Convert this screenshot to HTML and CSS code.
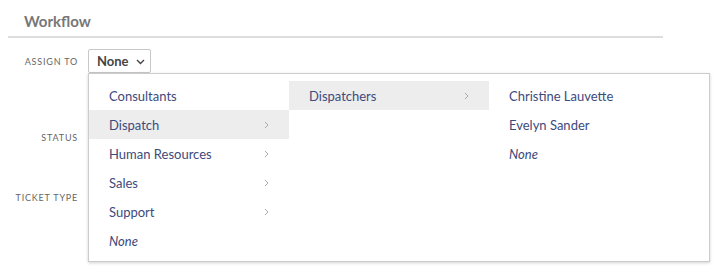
FILE: index.html
```html
<!DOCTYPE html>
<html>
<head>
<meta charset="utf-8">
<link rel="stylesheet" href="styles.css">
</head>
<body>
<section class="workflow">
  <h2 class="title">Workflow</h2>
  <div class="row row-assign">
    <label class="label">Assign to</label>
    <div class="control">
      <button class="select">None <svg class="caret" width="9" height="6" viewBox="0 0 9 6"><path d="M1 1l3.5 3.5L8 1" fill="none" stroke="#444" stroke-width="1.4"/></svg></button>
      <div class="menu">
        <ul class="col">
          <li class="item">Consultants</li>
          <li class="item active">Dispatch<svg class="chev" width="5" height="8" viewBox="0 0 5 8"><path d="M1 1l3 3-3 3" fill="none" stroke="#aaa" stroke-width="1"/></svg></li>
          <li class="item">Human Resources<svg class="chev" width="5" height="8" viewBox="0 0 5 8"><path d="M1 1l3 3-3 3" fill="none" stroke="#aaa" stroke-width="1"/></svg></li>
          <li class="item">Sales<svg class="chev" width="5" height="8" viewBox="0 0 5 8"><path d="M1 1l3 3-3 3" fill="none" stroke="#aaa" stroke-width="1"/></svg></li>
          <li class="item">Support<svg class="chev" width="5" height="8" viewBox="0 0 5 8"><path d="M1 1l3 3-3 3" fill="none" stroke="#aaa" stroke-width="1"/></svg></li>
          <li class="item none">None</li>
        </ul>
        <ul class="col">
          <li class="item active">Dispatchers<svg class="chev" width="5" height="8" viewBox="0 0 5 8"><path d="M1 1l3 3-3 3" fill="none" stroke="#aaa" stroke-width="1"/></svg></li>
        </ul>
        <ul class="col col-last">
          <li class="item">Christine Lauvette</li>
          <li class="item">Evelyn Sander</li>
          <li class="item none">None</li>
        </ul>
      </div>
    </div>
  </div>
  <div class="row row-status">
    <label class="label">Status</label>
  </div>
  <div class="row row-type">
    <label class="label">Ticket type</label>
  </div>
</section>
</body>
</html>
```
FILE: styles.css
```css
html, body {
  margin: 0;
  padding: 0;
  background: #fff;
}
body {
  padding: 0 8px;
  min-height: 273px;
  font-family: Lato, "Open Sans", sans-serif;
}
.workflow {
  width: 655px;
}
.title {
  margin: 0;
  padding: 12px 0 6px 16px;
  font-size: 15px;
  font-weight: 700;
  color: #777;
  line-height: 18px;
  border-bottom: 2px solid #ddd;
}
.row {
  display: flex;
  align-items: center;
}
.row-assign {
  margin-top: 11px;
  height: 24px;
}
.row-status {
  height: 30px;
  margin-top: 49px;
}
.row-type {
  height: 30px;
  margin-top: 30px;
}
.label {
  width: 70px;
  text-align: right;
  font-size: 9px;
  letter-spacing: 0.8px;
  text-transform: uppercase;
  color: #666;
  padding-right: 10px;
}
.control {
  position: relative;
}
.select {
  display: flex;
  align-items: center;
  gap: 7px;
  height: 24px;
  width: 63px;
  padding: 0 0 0 8px;
  border: 1px solid #c8c8c8;
  border-radius: 2px;
  background: #fff;
  font-family: Lato, sans-serif;
  font-size: 13px;
  font-weight: 700;
  color: #444;
  cursor: pointer;
}
.caret {
  margin-top: 1px;
}
.menu {
  position: absolute;
  left: 0;
  top: 24px;
  width: 622px;
  height: 189px;
  padding: 7px 0;
  box-sizing: border-box;
  display: flex;
  background: #fff;
  border: 1px solid #ccc;
  box-shadow: 0 1px 3px rgba(0,0,0,0.18);
  z-index: 5;
}
.col {
  list-style: none;
  margin: 0;
  padding: 0;
  width: 200px;
}
.col-last {
  flex: 1;
}
.item {
  height: 29px;
  display: flex;
  align-items: center;
  justify-content: space-between;
  padding: 0 20px;
  font-size: 13px;
  color: #3d4a7c;
}
.item.active {
  background: #ededed;
}
.item.none {
  font-style: italic;
}
.chev {
  margin-right: 0;
}
```
